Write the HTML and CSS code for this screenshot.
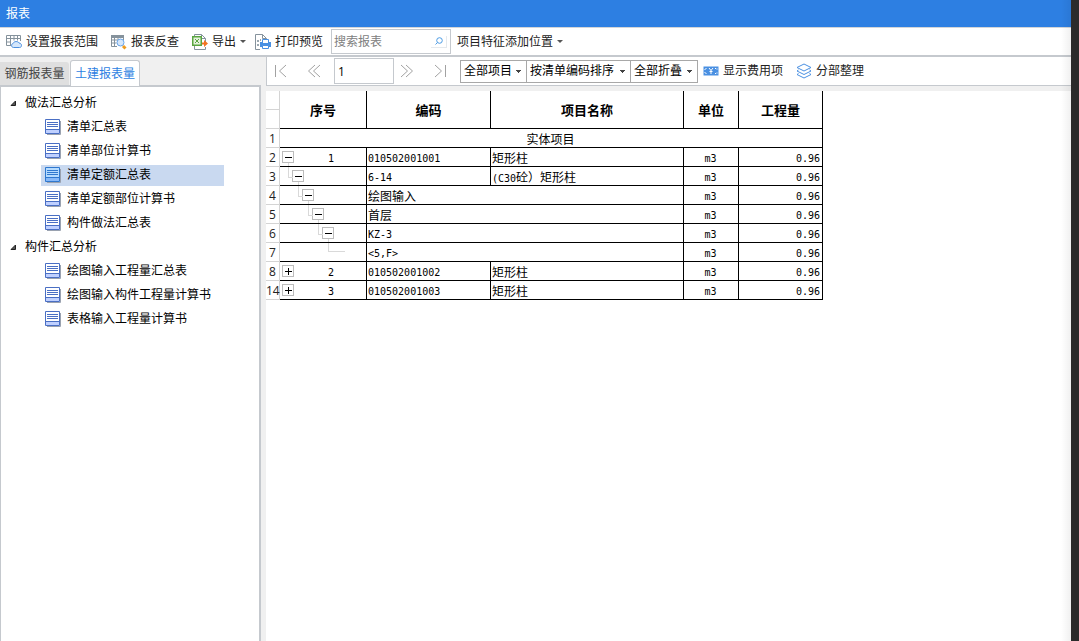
FILE: index.html
```html
<!DOCTYPE html>
<html lang="zh-CN">
<head>
<meta charset="utf-8">
<title>报表</title>
<link rel="stylesheet" href="styles.css">
</head>
<body>
<svg class="defs" width="0" height="0" aria-hidden="true">
  <symbol id="doc" viewBox="0 0 16 16">
    <path class="doc-shadow" d="M2 15.500h13.500V2"/>
    <path class="doc-page" d="M.5.5h14v14H.5z"/>
    <path class="doc-foot" d="M1 11h13v3H1z"/>
    <path class="doc-line" d="M0 10.500h15M2 3.500h11M2 5.500h11M2 7.500h11"/>
  </symbol>
</svg>
<div class="window">
  <div class="app">
    <header class="title">报表</header>
    <div class="toolbar">
      <button class="tool range"><svg width="16" height="16" viewBox="0 0 16 16" fill="none"><path d="M14.500 7V1.500H.5v10H5M.5 4.500h14M.5 8H5M4.500 1.500v10M8 1.500v5M11.500 1.500v5" stroke="#85929c"/><path d="M7.500 13.500c-2.500 0-2.500-3.500-.5-4C8 7 12 7 13 9c3 0 3.500 4.500.5 4.500z" fill="#d5e7fb" stroke="#4c8fde"/></svg>设置报表范围</button>
      <button class="tool check"><svg width="16" height="16" viewBox="0 0 16 16" fill="none"><path d="M0 1h13v3H0z" fill="#85929c"/><path d="M12.500 4v2M.5 2v10.500H6M.5 6h6M.5 9h5M3.500 4v8M7 4v2" stroke="#85929c"/><circle cx="9.500" cy="8.500" r="3.500" fill="#d5e7fb" stroke="#69a4e8"/><path d="m12 12 2.500 2.500" stroke="#ed9b20" stroke-width="3"/></svg>报表反查</button>
      <button class="tool export"><svg width="16" height="16" viewBox="0 0 16 16" fill="none"><path d="M2.500 3V.5h7l4 4v4M2.500 12v3.500h11V13M9.500.5v4h4" stroke="#85929c"/><path d="M.75 2.750h8.500v8.500H.75z" fill="#e4f2dc" stroke="#5aa541" stroke-width="1.500"/><path d="m3 5 4 4m0-4L3 9" stroke="#5aa541"/><path d="M10 8.500h2V6l4 3.500-4 3.500v-2.500h-2z" fill="#f37321"/></svg>导出<i class="caret"></i></button>
      <button class="tool print"><svg width="16" height="16" viewBox="0 0 16 16" fill="none"><path d="M5 15.500H.5V.5h7l4 4V6M7.500.5v4h4" stroke="#85929c"/><path d="M2 6h2v2H2zm0 4h2v2H2zM5 5h1v2H5z" fill="#9ba7af"/><path d="M5 8h11v5H5z" fill="#4a90e2"/><path d="M7.500 9V5.500h6V9M7.500 11.500h6v3h-6z" fill="#fff" stroke="#4a90e2"/></svg>打印预览</button>
      <div class="search"><input type="text" placeholder="搜索报表" aria-label="搜索报表"><button aria-label="搜索"><svg width="8" height="8" viewBox="0 0 8 8" fill="none" stroke="#4c9be4"><circle cx="4.500" cy="3.500" r="2.800"/><path d="M2.500 5.500.5 7.500"/></svg></button></div>
      <button class="tool">项目特征添加位置<i class="caret"></i></button>
    </div>
    <div class="content">
      <aside class="side">
        <div class="tabs" role="tablist"><button role="tab" aria-selected="false">钢筋报表量</button><button role="tab" aria-selected="true" class="active">土建报表量</button></div>
        <nav class="tree">
          <div class="group"><svg width="7" height="7" viewBox="0 0 7 7"><path d="M5.500 1v4.500H1z" fill="#555" stroke="#222"/></svg>做法汇总分析</div>
          <a href="#"><svg class="doc"><use href="#doc"/></svg>清单汇总表</a>
          <a href="#"><svg class="doc"><use href="#doc"/></svg>清单部位计算书</a>
          <a href="#" class="selected"><svg class="doc"><use href="#doc"/></svg>清单定额汇总表</a>
          <a href="#"><svg class="doc"><use href="#doc"/></svg>清单定额部位计算书</a>
          <a href="#"><svg class="doc"><use href="#doc"/></svg>构件做法汇总表</a>
          <div class="group"><svg width="7" height="7" viewBox="0 0 7 7"><path d="M5.500 1v4.500H1z" fill="#555" stroke="#222"/></svg>构件汇总分析</div>
          <a href="#"><svg class="doc"><use href="#doc"/></svg>绘图输入工程量汇总表</a>
          <a href="#"><svg class="doc"><use href="#doc"/></svg>绘图输入构件工程量计算书</a>
          <a href="#"><svg class="doc"><use href="#doc"/></svg>表格输入工程量计算书</a>
        </nav>
      </aside>
      <main class="report">
        <div class="pager">
          <button class="nav" aria-label="第一页"><svg width="14" height="14" viewBox="0 0 14 14"><path d="M1.500 1v12M12 1 5.500 7l6.500 6"/></svg></button>
          <button class="nav" aria-label="上一页"><svg width="14" height="14" viewBox="0 0 14 14"><path d="M8 1 1.500 7 8 13M13 1 6.500 7l6.500 6"/></svg></button>
          <input class="page" type="text" value="1" aria-label="页码">
          <button class="nav" aria-label="下一页"><svg width="14" height="14" viewBox="0 0 14 14"><path d="M1 1l6.500 6L1 13M6 1l6.500 6L6 13"/></svg></button>
          <button class="nav" aria-label="最后一页"><svg width="14" height="14" viewBox="0 0 14 14"><path d="M12.500 1v12M2 1l6.500 6L2 13"/></svg></button>
          <div class="filters">
            <select aria-label="项目"><option>全部项目</option></select>
            <select class="sort" aria-label="排序"><option>按清单编码排序</option></select>
            <select class="fold" aria-label="折叠"><option>全部折叠</option></select>
          </div>
          <button class="tool fee"><svg width="16" height="16" viewBox="0 0 16 16" fill="none"><path d="M.5 3.500h15v9H.5z" fill="#4a90e2"/><path d="m6 5 2 2.500L10 5M8 7.500V11M6.500 8.500h3" stroke="#fff"/><path d="M2 7V5.500h2M12 5.500h2V7M2 9v1.500h2M12 10.500h2V9" stroke="#fff" stroke-dasharray="1 1"/></svg>显示费用项</button>
          <button class="tool"><svg width="16" height="16" viewBox="0 0 16 16" fill="none" stroke="#4a90e2"><path d="m8 1 7 3.500L8 8 1 4.500zM2.500 7 1 8l7 3.500L15 8l-1.500-1M2.500 10.500 1 11.500 8 15l7-3.500-1.500-1"/></svg>分部整理</button>
        </div>
        <div class="sheet">
          <table>
            <colgroup><col class="c-row"><col class="c-seq"><col class="c-code"><col class="c-name"><col class="c-unit"><col class="c-qty"></colgroup>
            <thead><tr><td class="corner"></td><th>序号</th><th>编码</th><th>项目名称</th><th>单位</th><th>工程量</th></tr></thead>
            <tbody>
              <tr><td class="rn">1</td><td colspan="5" class="section">实体项目</td></tr>
              <tr><td class="rn">2</td><td class="seq"><button class="exp open" aria-label="折叠"></button>1</td><td>010502001001</td><td class="zh">矩形柱</td><td class="unit">m3</td><td class="qty">0.96</td></tr>
              <tr><td class="rn">3</td><td class="seq l1"><button class="exp open" aria-label="折叠"></button></td><td>6-14</td><td class="zh"><span class="latin">(C30</span>砼）矩形柱</td><td class="unit">m3</td><td class="qty">0.96</td></tr>
              <tr><td class="rn">4</td><td class="seq l2"><button class="exp open" aria-label="折叠"></button></td><td colspan="2" class="zh">绘图输入</td><td class="unit">m3</td><td class="qty">0.96</td></tr>
              <tr><td class="rn">5</td><td class="seq l3"><button class="exp open" aria-label="折叠"></button></td><td colspan="2" class="zh">首层</td><td class="unit">m3</td><td class="qty">0.96</td></tr>
              <tr><td class="rn">6</td><td class="seq l4"><button class="exp open" aria-label="折叠"></button></td><td colspan="2">KZ-3</td><td class="unit">m3</td><td class="qty">0.96</td></tr>
              <tr><td class="rn">7</td><td class="seq l5"><span class="leaf"></span></td><td colspan="2">&lt;5,F&gt;</td><td class="unit">m3</td><td class="qty">0.96</td></tr>
              <tr><td class="rn">8</td><td class="seq"><button class="exp" aria-label="展开"></button>2</td><td>010502001002</td><td class="zh">矩形柱</td><td class="unit">m3</td><td class="qty">0.96</td></tr>
              <tr><td class="rn">14</td><td class="seq"><button class="exp" aria-label="展开"></button>3</td><td>010502001003</td><td class="zh">矩形柱</td><td class="unit">m3</td><td class="qty">0.96</td></tr>
            </tbody>
          </table>
        </div>
      </main>
    </div>
  </div>
  <div class="edge"></div>
</div>
</body>
</html>
```
FILE: styles.css
```css
* { box-sizing: border-box; }
body { margin: 0; font: 12px/16px "Open Sans", "Noto Sans CJK SC", sans-serif; color: #000; background: #fff; }
button, input, select { font: inherit; color: inherit; margin: 0; padding: 0; border: 0; background: none; border-radius: 0; }
svg { flex: none; }
.defs { position: absolute; }
.window { display: flex; min-height: 100vh; }
.app { flex: 1; min-width: 0; display: flex; flex-direction: column; }
.edge { width: 8px; background: #2b2b2b; position: relative; }
.edge::before { content: ""; position: absolute; right: 100%; top: 0; bottom: 0; width: 10px; background: linear-gradient(90deg, transparent, rgba(0, 0, 0, .06)); pointer-events: none; }

.title { height: 27px; padding: 6px 6px 5px; background: #2d7fe2; color: #fff; }
.toolbar { height: 30px; display: flex; align-items: center; padding: 0 6px; background: #fff; border-top: 1px solid #d2d5d8; border-bottom: 2px solid #c5c9ce; white-space: nowrap; }
.tool { display: flex; align-items: center; gap: 4px; color: #222; white-space: nowrap; }
.range, .check { margin-right: 13px; }
.export { margin-right: 9px; }
.print { margin-right: 8px; }
.caret { border: 3px solid transparent; border-top-color: #555; border-bottom: 0; }
.search { width: 120px; height: 25px; display: flex; align-items: center; border: 1px solid #c5c9ce; margin-right: 6px; }
.search input { flex: 1; min-width: 0; padding: 0 2px; outline: 0; }
.search input::placeholder { color: #808080; opacity: 1; }
.search button { width: 16px; height: 12px; display: flex; align-items: center; justify-content: center; margin-right: 3px; border: 1px solid #e5e9ed; border-left: 0; border-top: 0; }

.content { flex: 1; display: flex; gap: 5px; background: #f0f0f0; }
.side { width: 261px; display: flex; flex-direction: column; padding-top: 3px; }
.tabs { display: flex; align-items: flex-end; height: 26px; position: relative; }
.tabs button { height: 23px; width: 69px; margin-bottom: 1px; background: #dfdfdf; color: #444; border-radius: 0 3px 0 0; }
.tabs .active { height: 26px; width: 70px; margin: 0 0 0 1px; border: 1px solid #c5c9ce; border-bottom: 0; border-radius: 3px 3px 0 0; background: #fff; color: #2d7fe2; }
.tree { flex: 1; display: flex; flex-direction: column; margin-top: -1px; padding-top: 4px; background: #fff; border: 1px solid #c5c9ce; border-width: 2px 2px 0 1px; }
.group { height: 24px; display: flex; align-items: center; gap: 8px; padding-left: 9px; }
.tree a { display: flex; align-items: center; gap: 6px; width: 183px; height: 21px; margin: 2px 0 1px 40px; padding: 0 0 1px 4px; color: inherit; text-decoration: none; white-space: nowrap; }
.tree .selected { background: #c9d9f0; }
.doc { width: 16px; height: 16px; --page: #fff; --foot: #bfd0ff; --ink: #4a6fc4; }
.selected .doc { --page: #b5dbff; --foot: #86b8f8; --ink: #2f78cf; }
.doc-shadow { fill: none; stroke: #9aa2b0; }
.doc-page { fill: var(--page); stroke: var(--ink); }
.doc-foot { fill: var(--foot); }
.doc-line { fill: none; stroke: var(--ink); }

.report { flex: 1; min-width: 0; display: flex; flex-direction: column; }
.pager { height: 29px; display: flex; align-items: center; background: #fff; border-left: 1px solid #c5c9ce; border-bottom: 1px solid #c5c9ce; }
.nav { width: 33px; height: 22px; display: flex; align-items: center; justify-content: center; }
.nav:first-child { width: 27px; margin-right: 3px; }
.nav path { fill: none; stroke: #a2a2a2; }
.page { width: 60px; height: 26px; margin-left: 4px; margin-right: -4px; padding: 0 3px; border: 1px solid #c5c9ce; outline: 0; }
.filters { display: flex; margin: 0 5px 0 4px; }
.filters select { appearance: none; width: 67px; height: 23px; padding: 0 0 0 3px; border: 1px solid #a8a8a8; margin-right: -1px; background: linear-gradient(#444, #444) right 5px top 9px / 5px 1px no-repeat, linear-gradient(#444, #444) right 6px top 10px / 3px 1px no-repeat, linear-gradient(#444, #444) right 7px top 11px / 1px 1px no-repeat; }
.filters .sort { width: 105px; }
.filters .fold { width: 68px; margin-right: 0; }
.fee { margin-right: 13px; }

.sheet { flex: 1; margin-top: 5px; background: #fff; overflow: auto; }
table { width: 557px; table-layout: fixed; border-collapse: separate; border-spacing: 0; font: 10px/14px "DejaVu Sans Mono", "Noto Sans CJK SC", monospace; }
.c-row { width: 14px; }
.c-seq { width: 87px; }
.c-code { width: 124px; }
.c-name { width: 193px; }
.c-unit { width: 55px; }
.c-qty { width: 84px; }
td, th { height: 19px; padding: 3px 2px 0 1px; border: 0 solid #000; border-width: 0 1px 1px 0; white-space: nowrap; }
th { height: 38px; padding: 0; font: bold 13px/16px "Noto Sans CJK SC", sans-serif; text-align: center; }
.rn, .corner { border-color: #d4d4d4; padding: 0; }
.rn { padding-top: 2px; font: 12px/16px "Open Sans", sans-serif; text-align: center; color: #222; }
.corner { background: linear-gradient(#d4d4d4, #d4d4d4) 0 18px / 100% 1px no-repeat; }
.zh, .section { font-size: 12px; padding-top: 4px; }
.section, .unit { text-align: center; }
.latin { font-size: 10px; line-height: 10px; }
.qty { text-align: right; }
.seq { position: relative; padding-left: 18px; text-align: center; }
.exp { position: absolute; left: 2px; top: 3px; width: 12px; height: 12px; border: 1px solid #bcbcbc; background: linear-gradient(#000, #000) 2px 5px / 7px 1px no-repeat, linear-gradient(#000, #000) 5px 2px / 1px 7px no-repeat; }
.exp.open { background: linear-gradient(#000, #000) 2px 5px / 7px 1px no-repeat; }
.exp.open::after { content: ""; position: absolute; left: 5px; top: 11px; height: 3px; border-left: 1px solid #d9d9d9; }
.l1 .exp { left: 12px; }
.l2 .exp { left: 22px; }
.l3 .exp { left: 32px; }
.l4 .exp { left: 42px; }
.l1 .exp::before, .l2 .exp::before, .l3 .exp::before, .l4 .exp::before { content: ""; position: absolute; left: -5px; top: -4px; width: 4px; height: 10px; border: 1px solid #d9d9d9; border-width: 0 0 1px 1px; }
.leaf { position: absolute; left: 48px; top: 0; width: 17px; height: 9px; border: 1px solid #d9d9d9; border-width: 0 0 1px 1px; }
```
